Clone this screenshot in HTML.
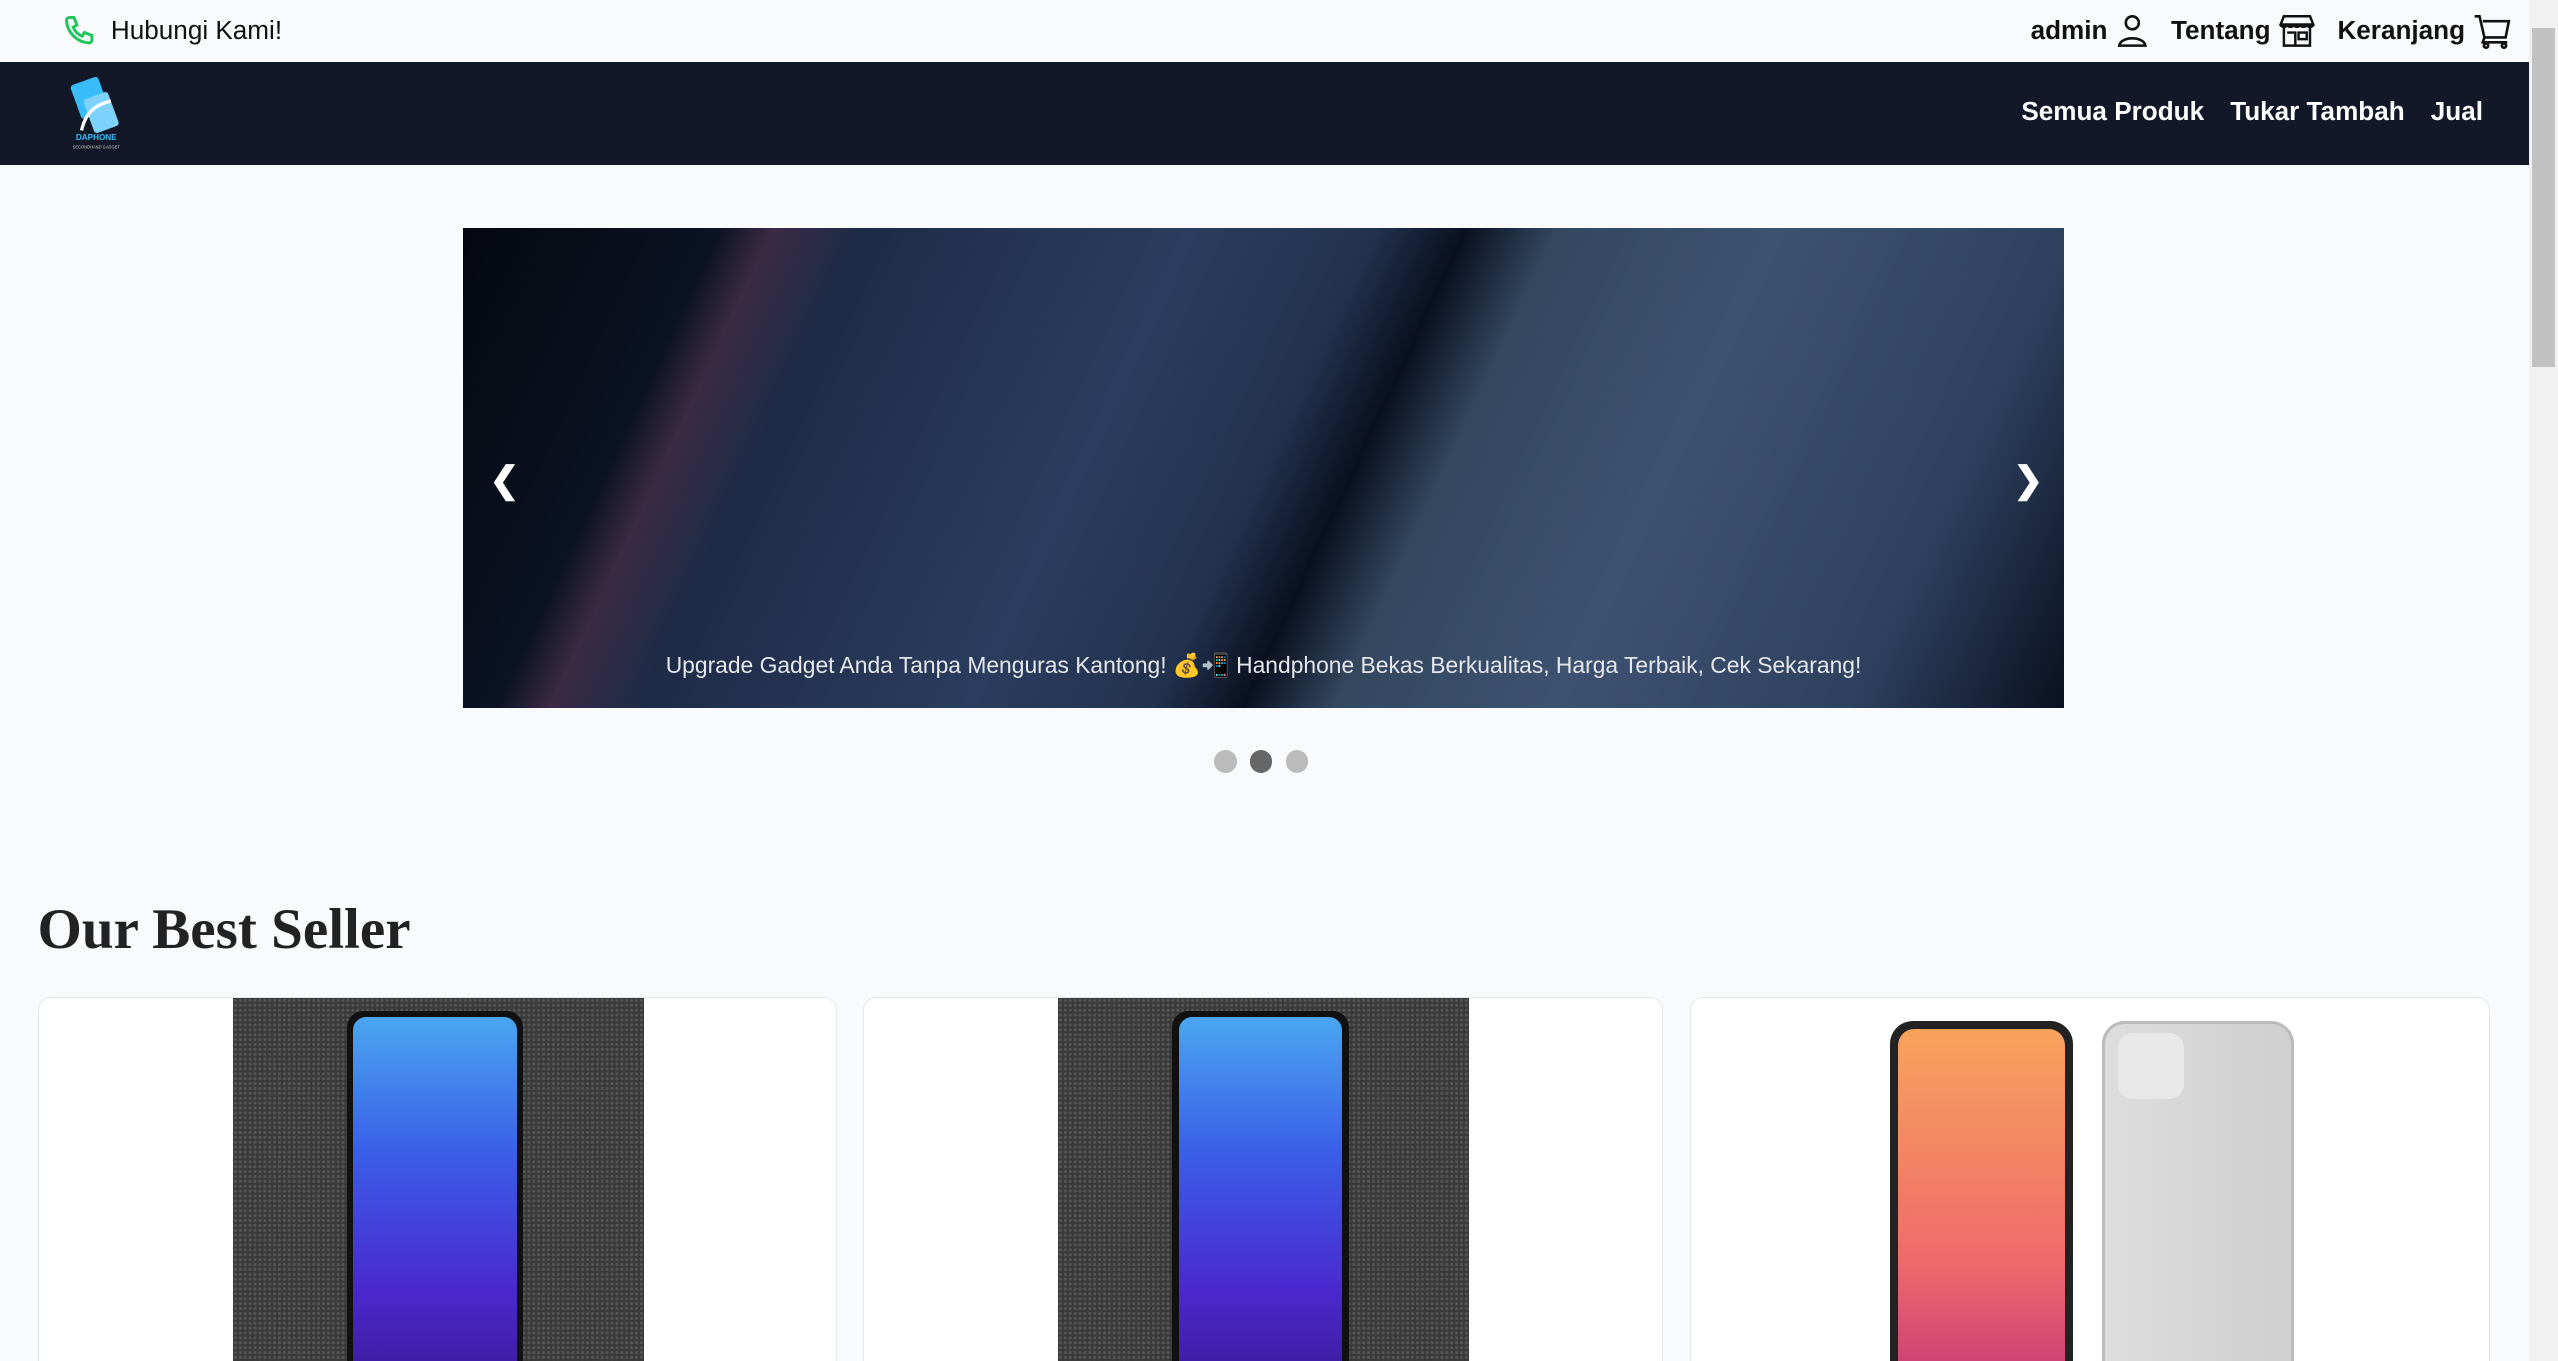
<!DOCTYPE html>
<html><head><meta charset="utf-8">
<style>
html,body{margin:0;padding:0;overflow:hidden;background:#f9fafb;}
body{width:2558px;height:1361px;}
#w{zoom:1.6314;width:1568px;height:834px;position:relative;overflow:hidden;font-family:"Liberation Sans",sans-serif;background:#f9fafb;color:#111;}
.top{position:absolute;left:0;top:0;width:1550px;height:38px;}
.top .l{position:absolute;left:38px;top:8px;font-size:16px;display:flex;align-items:center;gap:8px}
.top .r{position:absolute;right:10px;top:8px;font-size:16px;font-weight:bold;display:flex;gap:14px;align-items:center}
.top .r span{display:flex;align-items:center;gap:5px}
.nav{position:absolute;left:0;top:38px;width:1550px;height:63px;background:#121827;}
.nav .links{position:absolute;right:28px;top:21px;color:#fff;font-size:16px;font-weight:bold;display:flex;gap:16px}
.car{position:absolute;left:284px;top:140px;width:981px;height:294px;overflow:hidden;
background:linear-gradient(115deg,#05080f 0%,#0b1222 14%,#3a2a44 17%,#1d2b47 22%,#2b3d5e 40%,#22324e 50%,#0a1020 55%,#33475f 60%,#3d5270 72%,#2e4260 88%,#0a1020 100%);}
.car .cap{position:absolute;left:0;right:0;bottom:18px;text-align:center;color:#e5e7eb;font-size:14px}
.arr{position:absolute;top:282px;color:#fff;font-size:22px;font-weight:bold}
.dots{position:absolute;left:744px;top:460px;display:flex;gap:8px}
.dots i{width:14px;height:14px;border-radius:50%;background:#bbb;display:block}
h2{position:absolute;left:23px;top:550px;margin:0;font-family:"Liberation Serif",serif;font-size:35px;font-weight:bold;color:#222}
.card{position:absolute;top:611px;width:489px;height:240px;background:#fff;border:1px solid #e5e7eb;border-radius:8px;overflow:hidden}
.photo{position:absolute;left:119px;top:0;width:252px;height:240px;background:#3a3a3a;
background-image:radial-gradient(#555 1px,transparent 1px);background-size:3px 3px}
.ph{position:absolute;left:70px;top:8px;width:108px;height:240px;border-radius:10px;background:#111;}
.ph div{position:absolute;left:4px;top:4px;right:4px;bottom:0;border-radius:8px;background:linear-gradient(180deg,#4aa6f0 0%,#3a5fe8 35%,#4a2ad0 70%,#3a1890 100%)}
.sb{position:absolute;left:1550px;top:0;width:18px;height:834px;background:#f1f1f1}
.sb div{position:absolute;left:2px;top:17px;width:14px;height:208px;background:#c1c1c1}
</style></head><body><div id="w">
<div class="top">
 <div class="l"><svg width="22" height="22" viewBox="0 0 24 24" fill="none" stroke="#22c55e" stroke-width="2"><path d="M5 3h3l2 5-2.5 1.5a11 11 0 0 0 6 6L15 13l5 2v3a2 2 0 0 1-2 2A16 16 0 0 1 3 5a2 2 0 0 1 2-2z"/></svg>Hubungi Kami!</div>
 <div class="r">
  <span>admin <svg width="20" height="22" viewBox="0 0 20 22" fill="none" stroke="#111" stroke-width="1.6"><circle cx="10" cy="6" r="4"/><path d="M2 20c1-6 15-6 16 0z"/></svg></span>
  <span>Tentang <svg width="22" height="22" viewBox="0 0 22 22" fill="none" stroke="#111" stroke-width="1.5"><path d="M3 2h16l2 5H1zM1 7c0 2 4 2 4 0 0 2 4 2 4 0 0 2 4 2 4 0 0 2 4 2 4 0 0 2 4 2 4 0M3 9v11h16V9M5 12h5v8M12 12h5v4h-5z"/></svg></span>
  <span>Keranjang <svg width="24" height="22" viewBox="0 0 24 22" fill="none" stroke="#111" stroke-width="1.6"><path d="M1 2h3l3 13h13l2-10H6M7 15l-1 3h15"/><circle cx="8" cy="20" r="1.3"/><circle cx="19" cy="20" r="1.3"/></svg></span>
 </div>
</div>
<div class="nav">
 <svg style="position:absolute;left:38px;top:8px" width="42" height="46" viewBox="0 0 42 46"><rect x="8" y="3" width="18" height="22" rx="2" transform="rotate(-20 17 14)" fill="#38bdf8"/><rect x="16" y="12" width="16" height="22" rx="2" transform="rotate(-20 24 23)" fill="#7dd3fc"/><path d="M12 34c2-10 8-16 18-18" stroke="#fff" stroke-width="2" fill="none"/><text x="21" y="40" font-size="5" fill="#38bdf8" text-anchor="middle" font-family="Liberation Sans" font-weight="bold">DAPHONE</text><text x="21" y="45" font-size="2.5" fill="#ccc" text-anchor="middle" font-family="Liberation Sans">SECONDHAND GADGET</text></svg>
 <div class="links"><span>Semua Produk</span><span>Tukar Tambah</span><span>Jual</span></div>
</div>
<div class="car"><div class="cap">Upgrade Gadget Anda Tanpa Menguras Kantong! 💰📲 Handphone Bekas Berkualitas, Harga Terbaik, Cek Sekarang!</div></div>
<div class="arr" style="left:300px">❮</div><div class="arr" style="left:1234px">❯</div>
<div class="dots"><i></i><i style="background:#666"></i><i></i></div>
<h2>Our Best Seller</h2>
<div class="card" style="left:23px"><div class="photo"><div class="ph"><div></div></div></div></div>
<div class="card" style="left:529px"><div class="photo"><div class="ph"><div></div></div></div></div>
<div class="card" style="left:1036px"><div style="position:absolute;left:122px;top:14px;width:112px;height:240px;border-radius:14px;background:#222"><div style="position:absolute;left:5px;top:5px;right:5px;bottom:0;border-radius:10px;background:linear-gradient(180deg,#f7a35c,#ef6b6b 60%,#c0307a)"></div></div><div style="position:absolute;left:252px;top:14px;width:114px;height:240px;border-radius:14px;background:linear-gradient(90deg,#ddd,#cfcfcf);border:2px solid #bbb"><div style="position:absolute;left:8px;top:6px;width:40px;height:40px;border-radius:9px;background:#e8e8e8"></div></div></div>
<div class="sb"><div></div></div>
</div></body></html>
